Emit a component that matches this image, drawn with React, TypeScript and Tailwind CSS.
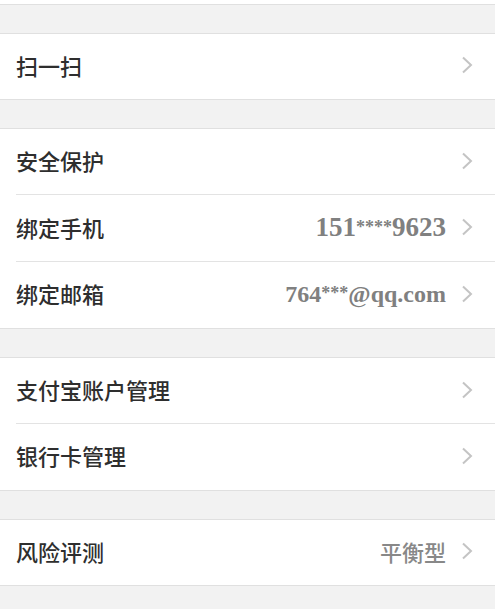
import type { FC, ReactNode } from "react";

interface RowProps {
  label: string;
  value?: ReactNode;
  h: string;
  divider?: boolean;
}

const Chevron: FC = () => (
  <svg width="12" height="18" viewBox="0 0 12 18" className="ml-[15px] shrink-0">
    <path d="M2 1.5 L10 9 L2 16.5" fill="none" stroke="#c4c4c4" strokeWidth="2" />
  </svg>
);

const Row: FC<RowProps> = ({ label, value, h, divider }) => (
  <div className={`relative flex items-center bg-white pb-[3px] pl-4 pr-[22px] ${h}`}>
    <span className="flex-1 text-[22px] font-medium text-[#2e2e2e]">{label}</span>
    {value}
    <Chevron />
    {divider && <div className="absolute bottom-0 left-4 right-0 h-px bg-[#e3e3e3]" />}
  </div>
);

const Gap: FC<{ h?: string }> = ({ h = "h-[28px]" }) => (
  <div className={`border-y border-[#e0e0e0] bg-[#f2f2f2] ${h}`} />
);

const Serif: FC<{ size: string; children: ReactNode }> = ({ size, children }) => (
  <span className={`font-bold text-[#808080] ${size}`} style={{ fontFamily: '"Liberation Serif", serif' }}>
    {children}
  </span>
);

const Stars: FC<{ n: number }> = ({ n }) => (
  <span className="relative -top-[3px] text-[18px]">{"*".repeat(n)}</span>
);

export default function App() {
  return (
    <div className="min-h-[609px] bg-white" style={{ fontFamily: '"Noto Sans CJK SC", sans-serif' }}>
      <div className="w-[495px] bg-[#f2f2f2]">
        <div className="h-[4px] bg-white" />
        <Gap h="h-[30px]" />
        <Row label="扫一扫" h="h-[65px]" />
        <Gap h="h-[30px]" />
        <Row label="安全保护" h="h-[66px]" divider />
        <Row
          label="绑定手机"
          h="h-[67px]"
          divider
          value={
            <Serif size="text-[27px]">
              151<Stars n={4} />9623
            </Serif>
          }
        />
        <Row
          label="绑定邮箱"
          h="h-[66px]"
          value={
            <Serif size="text-[24px]">
              764<Stars n={3} />@qq.com
            </Serif>
          }
        />
        <Gap h="h-[30px]" />
        <Row label="支付宝账户管理" h="h-[66px]" divider />
        <Row label="银行卡管理" h="h-[66px]" />
        <Gap h="h-[30px]" />
        <Row
          label="风险评测"
          h="h-[65px]"
          value={<span className="text-[22px] font-medium text-[#888]">平衡型</span>}
        />
        <div className="h-[24px] border-t border-[#e0e0e0] bg-[#f2f2f2]" />
      </div>
    </div>
  );
}
